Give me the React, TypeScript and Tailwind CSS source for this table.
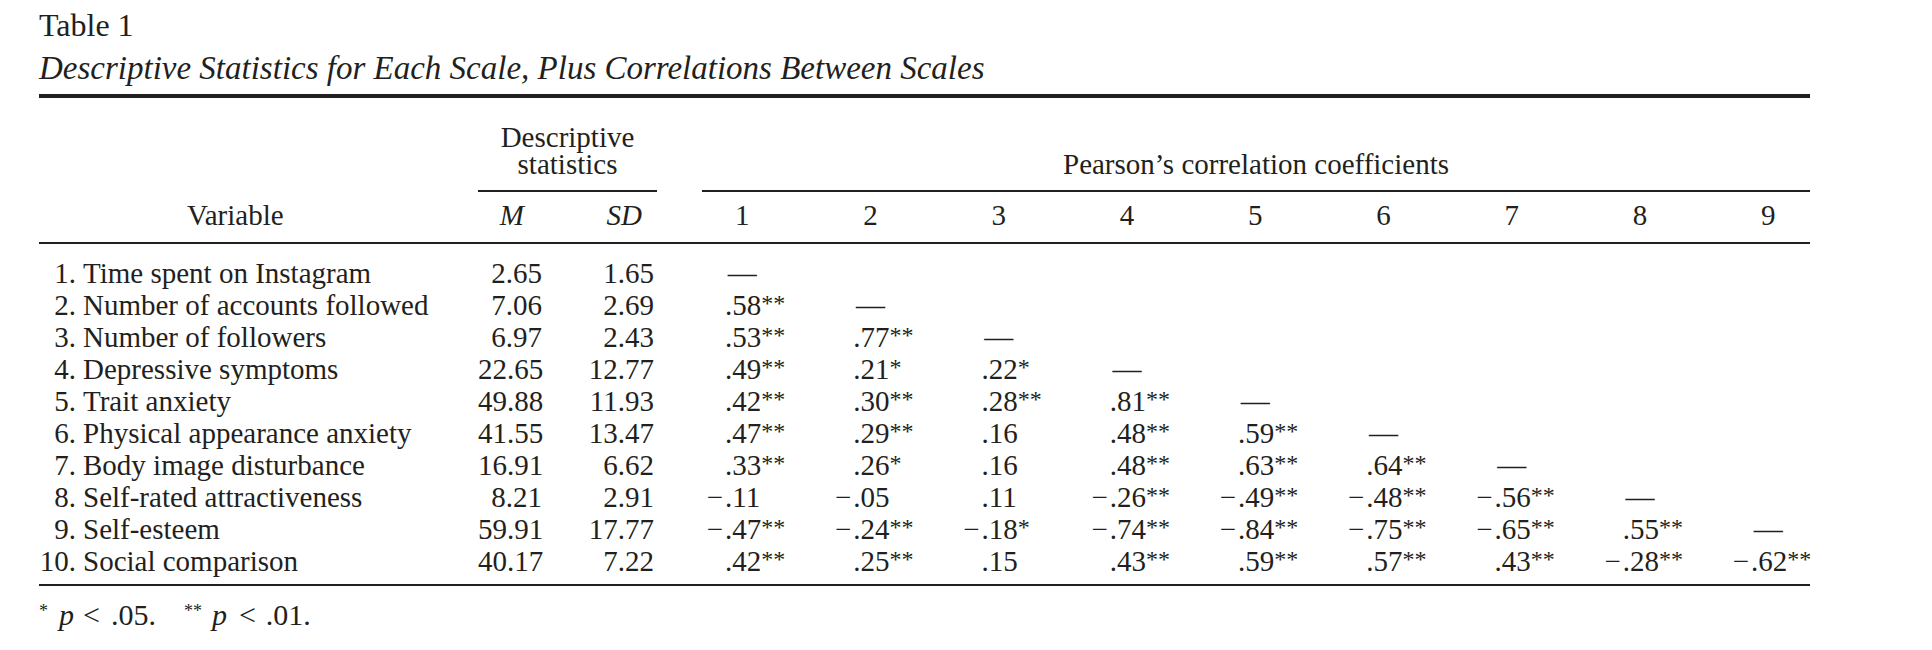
const rows: { label: string; m: string; sd: string; r: string[] }[] = [
  { label: 'Time spent on Instagram', m: '2.65', sd: '1.65', r: [] },
  { label: 'Number of accounts followed', m: '7.06', sd: '2.69', r: ['.58**'] },
  { label: 'Number of followers', m: '6.97', sd: '2.43', r: ['.53**', '.77**'] },
  { label: 'Depressive symptoms', m: '22.65', sd: '12.77', r: ['.49**', '.21*', '.22*'] },
  { label: 'Trait anxiety', m: '49.88', sd: '11.93', r: ['.42**', '.30**', '.28**', '.81**'] },
  {
    label: 'Physical appearance anxiety',
    m: '41.55',
    sd: '13.47',
    r: ['.47**', '.29**', '.16', '.48**', '.59**'],
  },
  {
    label: 'Body image disturbance',
    m: '16.91',
    sd: '6.62',
    r: ['.33**', '.26*', '.16', '.48**', '.63**', '.64**'],
  },
  {
    label: 'Self-rated attractiveness',
    m: '8.21',
    sd: '2.91',
    r: ['−.11', '−.05', '.11', '−.26**', '−.49**', '−.48**', '−.56**'],
  },
  {
    label: 'Self-esteem',
    m: '59.91',
    sd: '17.77',
    r: ['−.47**', '−.24**', '−.18*', '−.74**', '−.84**', '−.75**', '−.65**', '.55**'],
  },
  {
    label: 'Social comparison',
    m: '40.17',
    sd: '7.22',
    r: ['.42**', '.25**', '.15', '.43**', '.59**', '.57**', '.43**', '−.28**', '−.62**'],
  },
]

const cols = [1, 2, 3, 4, 5, 6, 7, 8, 9]

function Corr({ v }: { v?: string }) {
  if (!v) return <div />
  if (v === '—') return <div className="text-center">—</div>
  const neg = v.startsWith('−')
  const body = neg ? v.slice(1) : v
  const num = body.replace(/\*+$/, '')
  const stars = body.slice(num.length)
  return (
    <div className="flex">
      <span className="w-[47px] shrink-0 pr-[2px] text-right">{neg ? '−' : ''}</span>
      <span className="whitespace-nowrap">
        {num}
        {stars && <sup className="text-[24px] top-[-4px]">{stars}</sup>}
      </span>
    </div>
  )
}

export default function App() {
  return (
    <div className="min-h-[650px] bg-white pt-[9px] font-['Liberation_Serif',serif] text-[#231f20]">
      <div className="ml-[39px] w-[1771px]">
        <div className="text-[32px] leading-[33px]">Table 1</div>
        <div className="mt-[10px] text-[33px] leading-[33px] italic">
          Descriptive Statistics for Each Scale, Plus Correlations Between Scales
        </div>
        <div className="mt-[9px] h-[4px] bg-[#231f20]" />

        <div className="text-[29px]">
          {/* group headers */}
          <div className="mt-[26px] flex items-end leading-[27px]">
            <div className="w-[439px] shrink-0" />
            <div className="w-[179px] shrink-0 border-b-2 border-[#231f20] pb-[12px] text-center">
              <div>Descriptive</div>
              <div>statistics</div>
            </div>
            <div className="w-[45px] shrink-0" />
            <div className="w-[1108px] shrink-0 border-b-2 border-[#231f20] pb-[12px] text-center">
              Pearson’s correlation coefficients
            </div>
          </div>

          {/* column headers */}
          <div className="grid grid-cols-[439px_88px_91px_21px_repeat(9,128.25px)] border-b-2 border-[#231f20] pt-[7px] pb-[11px] leading-[32px]">
            <div className="pl-[148px]">Variable</div>
            <div className="pr-[42px] text-right italic">M</div>
            <div className="pr-[15px] text-right italic">SD</div>
            <div />
            {cols.map((c) => (
              <div key={c} className="text-center">
                {c}
              </div>
            ))}
          </div>

          {/* body */}
          <div className="border-b-2 border-[#231f20] pt-[13px] pb-[7px] leading-[32px]">
            {rows.map((row, i) => (
              <div
                key={row.label}
                className="grid grid-cols-[439px_88px_91px_21px_repeat(9,128.25px)]"
              >
                <div className="flex whitespace-nowrap">
                  <span className="w-[37px] shrink-0 text-right">{i + 1}.</span>
                  <span className="ml-[7px]">{row.label}</span>
                </div>
                <div className="pr-[24px] text-right">{row.m}</div>
                <div className="pr-[3px] text-right">{row.sd}</div>
                <div />
                {cols.map((c) => (
                  <Corr key={c} v={c <= row.r.length ? row.r[c - 1] : c === i + 1 ? '—' : undefined} />
                ))}
              </div>
            ))}
          </div>

          {/* footnote */}
          <div className="mt-[13px] flex items-baseline whitespace-nowrap text-[30px] leading-[32px]">
            <sup className="text-[18px] top-[-8px]">*</sup>
            <span className="ml-[11px] italic">p</span>
            <span className="ml-[9px]">&lt;</span>
            <span className="ml-[11px]">.05.</span>
            <sup className="ml-[28px] text-[18px] top-[-8px]">**</sup>
            <span className="ml-[10px] italic">p</span>
            <span className="ml-[12px]">&lt;</span>
            <span className="ml-[10px]">.01.</span>
          </div>
        </div>
      </div>
    </div>
  )
}
